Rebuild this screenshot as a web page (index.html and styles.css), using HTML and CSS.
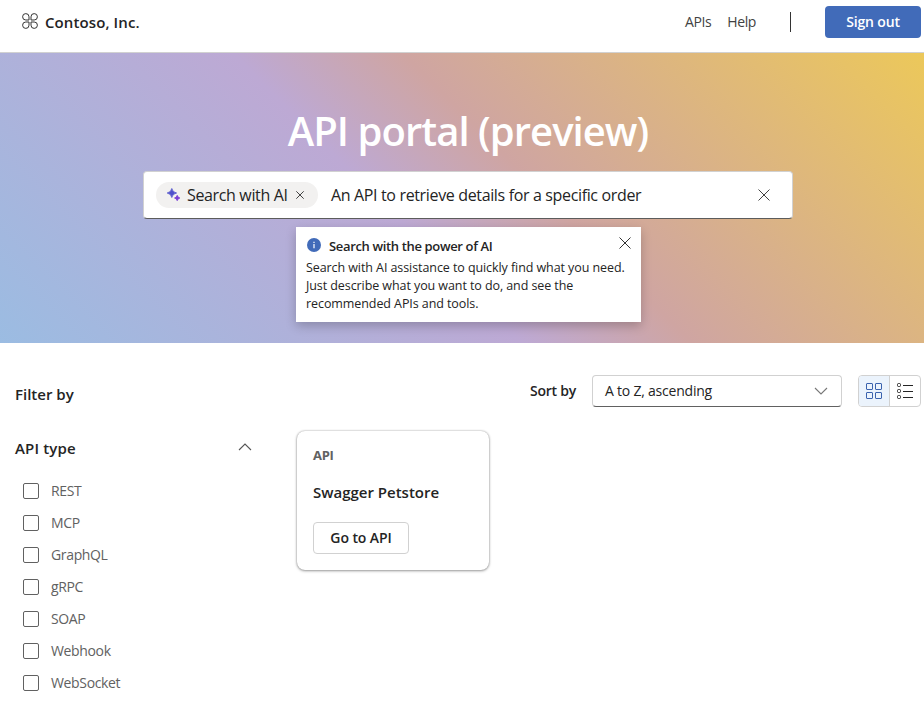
FILE: index.html
```html
<!DOCTYPE html>
<html lang="en">
<head>
<meta charset="utf-8">
<title>API portal</title>
<link rel="stylesheet" href="styles.css">
</head>
<body>
<header class="topbar">
  <a class="brand">
    <svg class="brand-logo" width="16" height="16" viewBox="0 0 16 16" fill="none" stroke="#333" stroke-width="1"><path d="M7 7H3.800A3.200 3.200 0 1 1 7 3.800ZM9 7H12.200A3.200 3.200 0 1 0 9 3.800ZM7 9H3.800A3.200 3.200 0 1 0 7 12.200ZM9 9H12.200A3.200 3.200 0 1 1 9 12.200Z"/></svg>
    <span class="brand-name">Contoso, Inc.</span>
  </a>
  <nav class="nav"><a class="nav-apis">APIs</a><a class="nav-help">Help</a></nav>
  <span class="divider"></span>
  <button class="sign-out"><span>Sign out</span></button>
</header>

<section class="hero">
  <h1><span>API portal (preview)</span></h1>
  <div class="search">
    <span class="chip">
      <svg width="14" height="14" viewBox="0 0 14 14"><path fill="#4f52cc" d="M4.800.5Q5.500 4.300 9.600 5Q5.500 5.700 4.800 9.500Q4.100 5.700.2 5Q4.100 4.300 4.800.5Z" stroke="#4f52cc" stroke-width=".8" stroke-linejoin="round"/><path fill="#7a3fd6" d="M10.200 7.300Q10.700 9.500 12.900 10Q10.700 10.500 10.200 12.700Q9.700 10.500 7.500 10Q9.700 9.500 10.200 7.300Z" stroke="#7a3fd6" stroke-width=".8" stroke-linejoin="round"/></svg>
      <span class="chip-label">Search with AI</span>
      <svg class="chip-close" width="8" height="8" viewBox="0 0 8 8" stroke="#424242" stroke-width="1"><path d="M.3.3l7.400 7.400M7.700.3L.3 7.700"/></svg>
    </span>
    <span class="query">An API to retrieve details for a specific order</span>
    <svg class="clear" width="12" height="12" viewBox="0 0 12 12" stroke="#424242" stroke-width="1"><path d="M.5.5l11 11M11.500.5l-11 11"/></svg>
  </div>
  <aside class="tip">
    <div class="tip-head">
      <svg class="info" width="14" height="14" viewBox="0 0 14 14"><circle cx="7" cy="7" r="7" fill="#416bb9"/><path d="M7 6v4.200M7 3.700v1.300" stroke="#fff" stroke-width="1.200"/></svg>
      <strong>Search with the power of AI</strong>
      <svg class="tip-close" width="12" height="12" viewBox="0 0 12 12" stroke="#333" stroke-width="1"><path d="M.5.5l11 11M11.500.5l-11 11"/></svg>
    </div>
    <p><span>Search with AI assistance to quickly find what you need.</span><br><span>Just describe what you want to do, and see the</span><br><span>recommended APIs and tools.</span></p>
  </aside>
</section>

<main class="content">
  <aside class="filters">
    <h2><span>Filter by</span></h2>
    <div class="group"><h3>API type</h3>
      <svg width="14" height="8" viewBox="0 0 14 8" fill="none" stroke="#555" stroke-width="1.1"><path d="M1 7l6-6 6 6"/></svg>
    </div>
    <ul>
      <li><i class="box"></i><span>REST</span></li>
      <li><i class="box"></i><span>MCP</span></li>
      <li><i class="box"></i><span>GraphQL</span></li>
      <li><i class="box"></i><span>gRPC</span></li>
      <li><i class="box"></i><span>SOAP</span></li>
      <li><i class="box"></i><span>Webhook</span></li>
      <li><i class="box"></i><span>WebSocket</span></li>
    </ul>
  </aside>
  <section class="results">
    <div class="toolbar">
      <span class="sort-label">Sort by</span>
      <div class="select"><span>A to Z, ascending</span>
        <svg width="14" height="8" viewBox="0 0 14 8" fill="none" stroke="#777" stroke-width="1.1"><path d="M1 1l6 6 6-6"/></svg>
      </div>
      <div class="views">
        <span class="view active"><svg width="16" height="16" viewBox="0 0 16 16" fill="none" stroke="#3a62ae"><rect x=".5" y=".5" width="6" height="6" rx=".5"/><rect x="9.500" y=".5" width="6" height="6" rx=".5"/><rect x=".5" y="9.500" width="6" height="6" rx=".5"/><rect x="9.500" y="9.500" width="6" height="6" rx=".5"/></svg></span>
        <span class="view"><svg width="16" height="16" viewBox="0 0 16 16" fill="none" stroke="#242424"><rect x=".5" y=".5" width="3" height="3" rx="1"/><rect x=".5" y="6.500" width="3" height="3" rx="1"/><rect x=".5" y="12.500" width="3" height="3" rx="1"/><path d="M6 2.500h10M6 8.500h10M6 14.500h10"/></svg></span>
      </div>
    </div>
    <article class="card">
      <span class="kind">API</span>
      <h4><span>Swagger Petstore</span></h4>
      <button class="go"><span>Go to API</span></button>
    </article>
  </section>
</main>
</body>
</html>
```
FILE: styles.css
```css
* { box-sizing: border-box; }
body { margin: 0; height: 701px; overflow: hidden; background: #fff; color: #242424; font: 14px/20px "Open Sans", "Noto Sans", sans-serif; }
h1, h2, h3, h4, p, ul { margin: 0; padding: 0; }
svg { flex: none; display: block; }
button { font: inherit; padding: 0; }
span, strong, h3 { white-space: nowrap; }

.topbar { display: flex; align-items: center; height: 53px; padding: 0 3px 8px 22px; border-bottom: 1px solid #d1d1d1; }
.brand { display: flex; align-items: center; gap: 7px; flex: 1; }
.brand-logo { margin-top: -2px; }
.brand-name { font-weight: 600; font-size: 15px; letter-spacing: .1px; }
.nav { display: flex; gap: 16px; color: #424242; }
.nav-apis, .nav-help { font-size: 14px; letter-spacing: -.4px; }
.divider { width: 1px; height: 20px; background: #333; margin: 0 34px; }
.sign-out { width: 96px; height: 32px; border: 0; border-radius: 4px; background: #416bb9; color: #fff; font-weight: 600; letter-spacing: -.15px; }

.hero { height: 290px; display: flex; flex-direction: column; align-items: center; padding: 51px 0 0 12px; background: linear-gradient(45deg, #9bbce2, #bda9d4 43%, #cfa5a2 57%, #ecc85a); }
.hero h1 { height: 54px; font-size: 40px; line-height: 54px; font-weight: 600; color: #fff; letter-spacing: -.95px; }
.search { display: flex; align-items: center; width: 650px; height: 48px; margin-top: 13px; padding: 0 22px 0 12px; border: 1px solid #d1d1d1; border-bottom-color: #5c5c5c; border-radius: 4px; background: #fff; font-size: 16px; }
.chip { display: flex; align-items: center; width: 162px; height: 26px; padding-left: 11px; border-radius: 13px; background: #f2f1f0; }
.chip-label { margin-left: 6px; width: 109px; letter-spacing: -.35px; }
.query { flex: 1; margin-left: 13px; letter-spacing: -.35px; }
.tip { width: 345px; height: 95px; margin: 8px 0 0 1px; padding: 8px 10px; background: #fff; box-shadow: 0 4px 10px rgba(0,0,0,.22); font-size: 12.5px; line-height: 18px; letter-spacing: -.08px; }
.tip-head { display: flex; align-items: center; height: 24px; }
.tip-head strong { flex: 1; margin: -2px 0 0 8px; font-weight: 600; font-size: 13px; letter-spacing: -.35px; }
.tip-close { margin-top: -8px; }
.info { margin: -4px 0 0 1px; }

.content { display: flex; }
.filters { width: 297px; padding: 40px 0 0 15px; }
.filters h2, .group h3 { font-size: 15px; line-height: 22px; font-weight: 600; }
.group h3 { letter-spacing: .15px; }
.group { display: flex; align-items: center; justify-content: space-between; width: 237px; margin: 32px 0 16px; }
.group svg { margin-top: -2px; }
.filters ul { list-style: none; padding-left: 8px; }
.filters li { display: flex; align-items: center; height: 32px; gap: 12px; color: #616161; letter-spacing: -.35px; }
.box { width: 16px; height: 16px; border: 1px solid #616161; border-radius: 2px; }
.results { flex: 1; padding: 32px 3px 0 0; }
.toolbar { display: flex; align-items: center; justify-content: flex-end; }
.sort-label { font-weight: 600; margin-right: 16px; letter-spacing: -.25px; }
.select { display: flex; align-items: center; justify-content: space-between; width: 250px; height: 32px; padding: 0 13px 0 12px; border: 1px solid #d1d1d1; border-bottom-color: #616161; border-radius: 4px; letter-spacing: -.22px; }
.views { display: flex; width: 63px; height: 32px; margin-left: 16px; border: 1px solid #d1d1d1; border-radius: 4px; overflow: hidden; }
.view { flex: 1; display: flex; align-items: center; justify-content: center; }
.view.active { background: #ebf3fc; border-right: 1px solid #d1d1d1; }
.card { width: 192px; height: 139px; margin-top: 24px; padding: 14px 16px; border-radius: 8px; box-shadow: 0 0 2px rgba(0,0,0,.3), 0 1px 3px rgba(0,0,0,.35); }
.kind { display: block; font-size: 13px; font-weight: 700; color: #616161; letter-spacing: -.3px; }
.card h4 { margin-top: 16px; font-size: 15px; line-height: 22px; font-weight: 600; }
.go { width: 96px; height: 32px; margin-top: 19px; border: 1px solid #d1d1d1; border-radius: 4px; background: #fff; color: #242424; font-weight: 600; letter-spacing: -.1px; }
```
